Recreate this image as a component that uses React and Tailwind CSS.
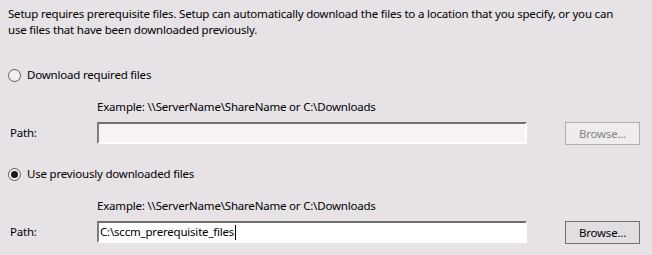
import React from 'react';

function Radio({ checked, label }) {
  return (
    <div className="flex h-[16px] items-center">
      <span className="flex h-[13px] w-[13px] items-center justify-center rounded-full border border-[#5a5a5a] bg-[#f2eef2]">
        {checked && <span className="h-[7px] w-[7px] rounded-full bg-[#1a1a1a]" />}
      </span>
      <span className="ml-[6px]">{label}</span>
    </div>
  );
}

function PathRow({ enabled, value }) {
  return (
    <div className="flex items-start">
      <div className="flex h-[22px] w-[89px] items-center pl-[2px]">Path:</div>
      <div
        className={`flex h-[22px] w-[430px] items-center border-2 border-t-[#6e6e6e] border-l-[#7e7e7e] border-r-white border-b-white pl-[1px] ${
          enabled ? 'bg-white' : 'bg-[#f6f2f6]'
        }`}
      >
        {value}
        {enabled && <span className="ml-[1px] h-[15px] w-px bg-black" />}
      </div>
      <div
        className={`ml-[38px] flex h-[23px] w-[75px] items-center justify-center border ${
          enabled ? 'border-[#707070] bg-[#e1dde1] text-black' : 'border-[#b0b0b0] bg-[#efebef] text-[#838383]'
        }`}
      >
        Browse...
      </div>
    </div>
  );
}

export default function App() {
  return (
    <div
      className="h-[255px] w-[652px] overflow-hidden bg-[#e6e2e6] pl-[8px] pt-[6px] text-[11.5px] leading-[16px] tracking-[-0.2px] text-black"
      style={{ fontFamily: '"Segoe UI", "Noto Sans", sans-serif' }}
    >
      <p className="w-[622px]">
        Setup requires prerequisite files. Setup can automatically download the files to a location that you specify, or you can use files that have been downloaded previously.
      </p>

      <div className="mt-[29px]">
        <Radio label="Download required files" />
      </div>
      <div className="mt-[16px] pl-[89px]">Example: \\ServerName\ShareName or C:\Downloads</div>
      <div className="mt-[7px]">
        <PathRow enabled={false} value="" />
      </div>

      <div className="mt-[21px]">
        <Radio checked label="Use previously downloaded files" />
      </div>
      <div className="mt-[16px] pl-[89px]">Example: \\ServerName\ShareName or C:\Downloads</div>
      <div className="mt-[7px]">
        <PathRow enabled value="C:\sccm_prerequisite_files" />
      </div>
    </div>
  );
}
